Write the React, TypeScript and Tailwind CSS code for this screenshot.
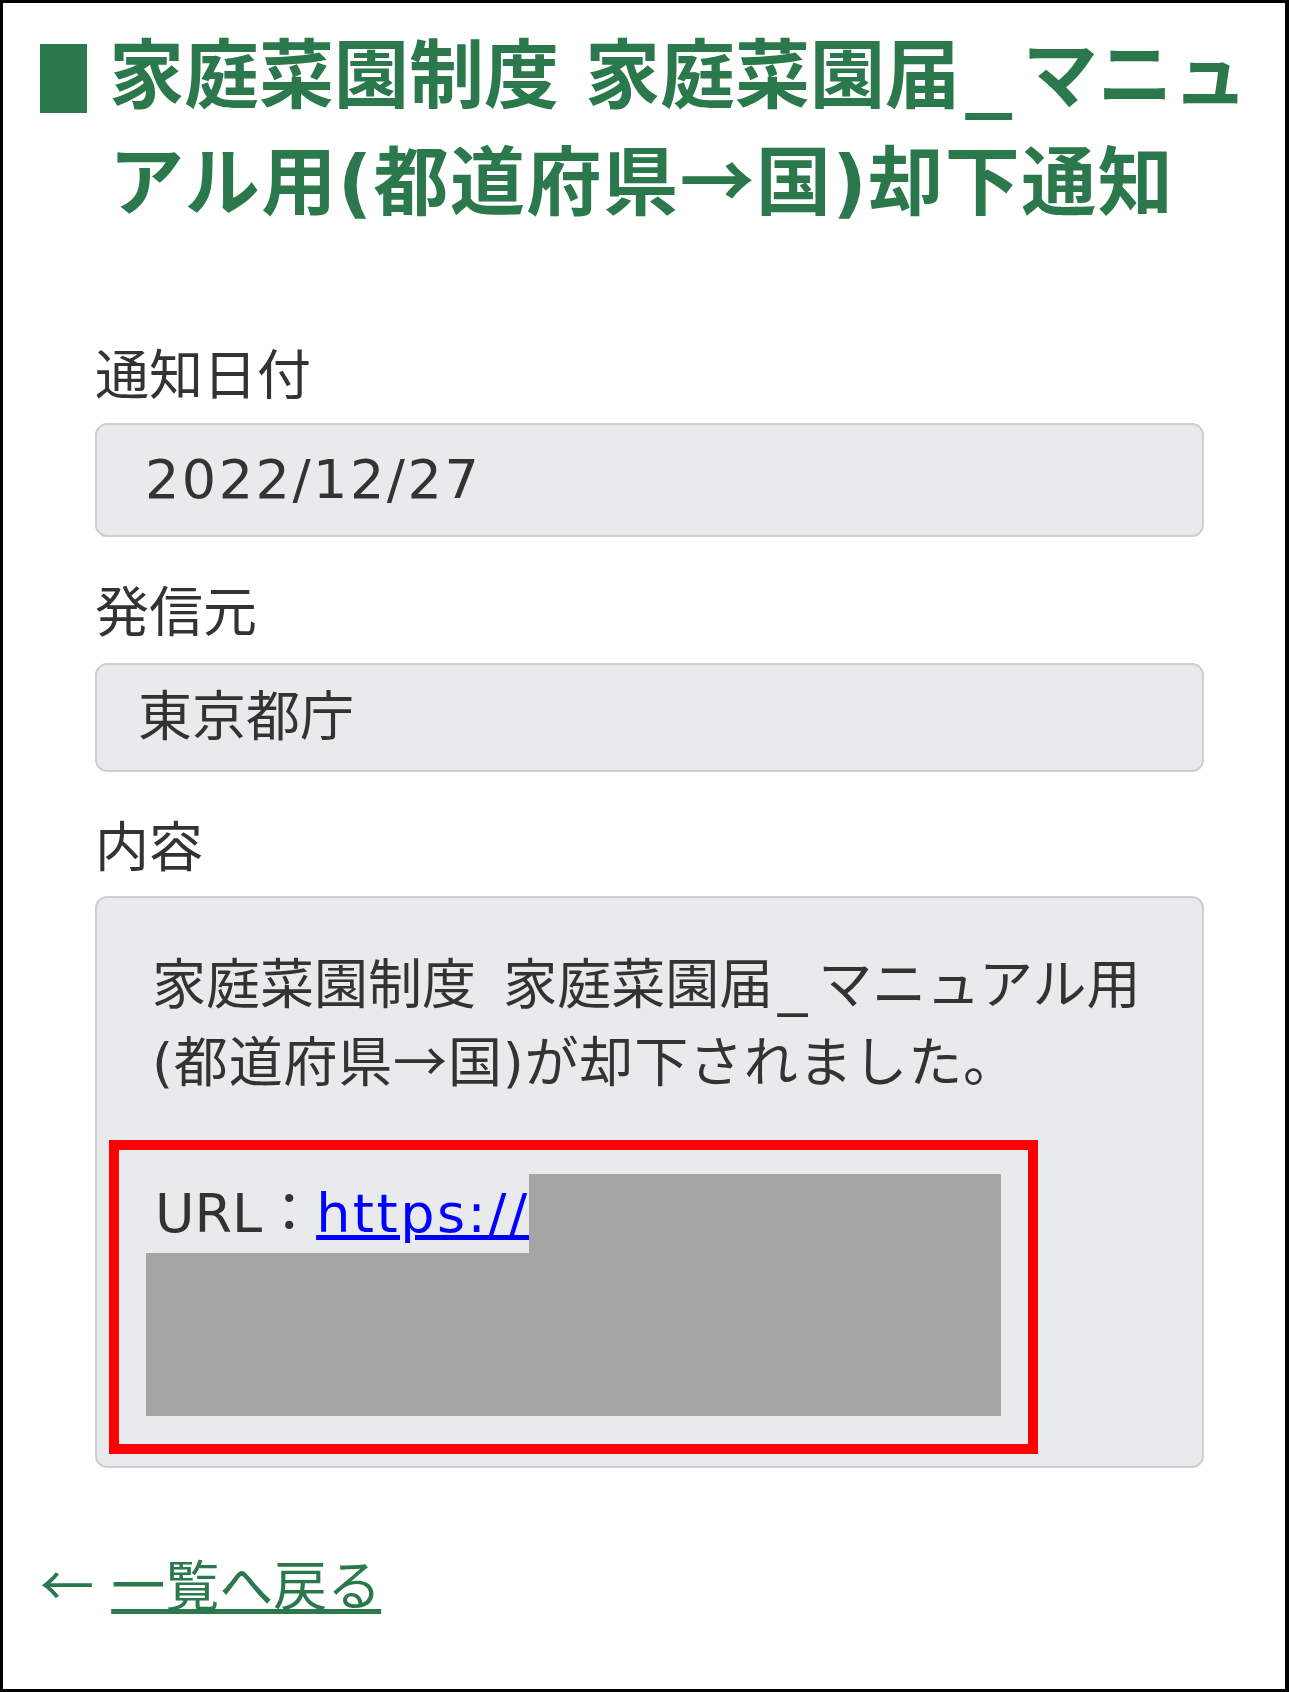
export default function App() {
  const font = "font-['DejaVu_Sans','Noto_Sans_CJK_JP',sans-serif]";
  const cjk = "font-['Noto_Sans_CJK_JP',sans-serif] leading-none";
  return (
    <div
      className={`w-[1289px] h-[1692px] bg-white border-[3px] border-r-[4px] border-black ${font} text-[#333]`}
    >
      <div className="pl-[37px] pt-[20px]">
        {/* Title */}
        <div className="flex">
          <div className="w-[47px] h-[69px] mt-[21px] bg-[#2a784b] shrink-0" />
          <h1 className="ml-[22px] text-[75px] leading-[107px] font-bold text-[#2a784b] whitespace-nowrap">
            家庭菜園制度 家庭菜園届
            <span className="inline-block leading-none ml-[10px] mr-[15px] scale-x-125">_</span>マニュ
            <br />
            <span className="tracking-[1.5px]">
              アル用(都道府県<span className={cjk}>→</span>国)却下通知
            </span>
          </h1>
        </div>

        {/* Form */}
        <div className="ml-[55px] w-[1109px] mt-[101px]">
          <div className="text-[54px] leading-[78px]">通知日付</div>
          <div className="mt-[7px] h-[114px] rounded-[12px] border-2 border-[#cdd0d3] bg-[#e9eaec] flex items-center pl-[48px] text-[54px] leading-[78px] tracking-[2.5px]">
            2022/12/27
          </div>

          <div className="mt-[38px] text-[54px] leading-[78px]">発信元</div>
          <div className="mt-[10px] h-[109px] rounded-[12px] border-2 border-[#cdd0d3] bg-[#e9eaec] flex items-center pl-[41px] text-[54px] leading-[78px]">
            東京都庁
          </div>

          <div className="mt-[38px] text-[54px] leading-[78px]">内容</div>
          <div className="mt-[8px] rounded-[12px] border-2 border-[#cdd0d3] bg-[#e9eaec] pt-[49px] pb-[12px]">
            <div className="pl-[55px] text-[54px] leading-[78px] whitespace-nowrap">
              <span className="[word-spacing:10px]">家庭菜園制度 家庭菜園届</span>
              <span className="inline-block leading-none ml-[6px] mr-[12px] scale-x-110">_</span>マニュアル用
              <br />
              <span className="tracking-[0.8px]">
                (都道府県<span className={cjk}>→</span>国)が却下されました。
              </span>
            </div>
            <div className="mt-[37px] ml-[12px] w-[929px] border-[10px] border-[#ff0000] pt-[24px] pl-[27px] pr-[27px] pb-[28px]">
              <div className="flex h-[79px]">
                <div className="w-[383px] overflow-hidden whitespace-nowrap flex items-center pl-[9px] text-[54px] leading-[78px]">
                  URL：
                  <a href="#" className="text-[#0000ff] underline tracking-[2.5px]">
                    https://www
                  </a>
                </div>
                <div className="flex-1 bg-[#a5a5a5]" />
              </div>
              <div className="h-[163px] bg-[#a5a5a5]" />
            </div>
          </div>
        </div>

        {/* Back link */}
        <div className="mt-[81px] text-[54px] leading-[78px] text-[#2a784b] whitespace-nowrap">
          <span className={cjk}>←</span>{" "}
          <a href="#" className="underline">
            一覧へ戻る
          </a>
        </div>
      </div>
    </div>
  );
}
